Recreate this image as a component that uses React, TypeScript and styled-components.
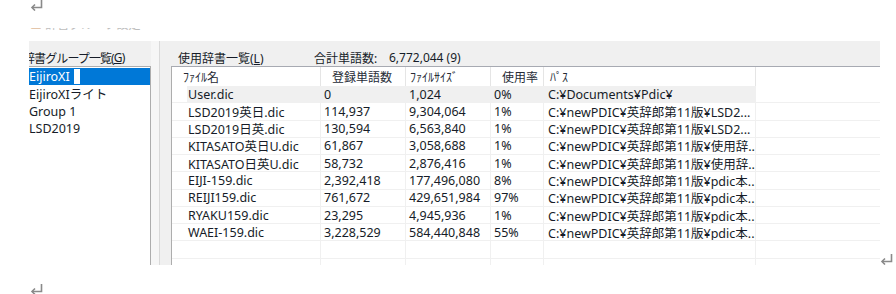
import React from "react";
import styled, { createGlobalStyle } from "styled-components";

const GlobalStyle = createGlobalStyle`
  html, body {
    margin: 0;
    padding: 0;
    background: #ffffff;
  }
  body {
    font-family: "Noto Sans", "Noto Sans CJK JP", sans-serif;
    font-size: 12.5px;
    color: #161c28;
  }
`;

const Page = styled.div`
  width: 896px;
  height: 294px;
  overflow: hidden;
`;

const MarkLine = styled.div<{ $top?: number }>`
  display: flex;
  padding-left: 30px;
  margin-top: ${(p) => p.$top || 0}px;
  height: 11px;
`;

const FadedLine = styled.div`
  margin: 17px 0 0 30px;
  height: 5px;
  overflow: hidden;
  color: #bdbdbd;
  font-size: 12px;
  line-height: 14px;
  & span {
    display: block;
    margin-top: -10px;
  }
  & b {
    color: #d39a6a;
    font-weight: normal;
  }
`;

const DialogRow = styled.div`
  display: flex;
  align-items: flex-end;
  margin: 8px 0 0 29px;
`;

const Dialog = styled.div`
  display: flex;
  width: 851px;
  height: 224px;
  background: #f0f0f0;
  overflow: hidden;
`;

const LeftPane = styled.div`
  display: flex;
  flex-direction: column;
  width: 126px;
  margin-left: -4px;
  flex-shrink: 0;
`;

const PaneLabel = styled.div`
  display: flex;
  align-items: center;
  height: 17px;
  padding-top: 8px;
  white-space: nowrap;
  font-size: 12px;
`;

const GroupLabel = styled(PaneLabel)`
  margin-left: -2px;
  letter-spacing: -0.9px;
`;

const ListBox = styled.div`
  flex: 1;
  background: #ffffff;
  border: 1px solid #adadad;
  border-bottom: none;
  padding-top: 1px;
`;

const ListItem = styled.div<{ $selected?: boolean }>`
  display: flex;
  align-items: center;
  height: 17.27px;
  padding-left: 3px;
  white-space: nowrap;
  background: ${(p) => (p.$selected ? "#0078d7" : "transparent")};
  color: ${(p) => (p.$selected ? "#ffffff" : "#161c28")};
`;

const EditCaret = styled.span`
  display: inline-block;
  width: 6px;
  height: 15px;
  margin-left: 4px;
  background: #ffffff;
`;

const Splitter = styled.div`
  width: 8px;
  flex-shrink: 0;
  background: #f6f6f6;
  border-right: 1px solid #d9d9d9;
`;

const RightPane = styled.div`
  display: flex;
  flex-direction: column;
  flex: 1;
  min-width: 0;
`;

const RightLabels = styled(PaneLabel)`
  padding-left: 18px;
`;

const LabelText = styled.span<{ $w: number }>`
  display: inline-block;
  width: ${(p) => p.$w}px;
`;

const ListView = styled.div`
  flex: 1;
  margin-left: 11px;
  background: #ffffff;
  border-top: 1px solid #a7aab2;
  border-left: 1px solid #adadad;
  overflow: hidden;
`;

const HeaderRow = styled.div`
  display: flex;
  height: 19px;
`;

const HeaderCell = styled.div<{ $w: number; $pad: number }>`
  box-sizing: border-box;
  width: ${(p) => p.$w}px;
  padding-left: ${(p) => p.$pad}px;
  border-right: 1px solid #e5e5e5;
  display: flex;
  align-items: center;
  font-size: 12px;
  color: #262b36;
  white-space: nowrap;
`;

const Row = styled.div`
  display: flex;
  box-sizing: border-box;
  height: 17.27px;
  border-bottom: 1px solid #f0f0f0;
`;

const Indent = styled.div`
  width: 15px;
  flex-shrink: 0;
`;

const RowBody = styled.div<{ $hot?: boolean }>`
  display: flex;
  background: ${(p) => (p.$hot ? "#f0f0f0" : "transparent")};
`;

const Cell = styled.div<{ $w: number; $pad: number }>`
  box-sizing: border-box;
  width: ${(p) => p.$w}px;
  padding-left: ${(p) => p.$pad}px;
  border-right: 1px solid #f0f0f0;
  display: flex;
  align-items: center;
  white-space: nowrap;
  overflow: hidden;
`;

function ReturnMark() {
  return (
    <svg width="13" height="11" viewBox="0 0 13 11">
      <path d="M11.5 0 V7.5 H2" fill="none" stroke="#8a8a8a" strokeWidth="1.6" />
      <path d="M5 4.5 L2 7.5 L5 10.5" fill="none" stroke="#8a8a8a" strokeWidth="1.6" />
    </svg>
  );
}

const headers = [
  { label: "ﾌｧｲﾙ名", w: 149, pad: 11 },
  { label: "登録単語数", w: 85, pad: 11 },
  { label: "ﾌｧｲﾙｻｲｽﾞ", w: 85, pad: 4 },
  { label: "使用率", w: 53, pad: 11 },
  { label: "ﾊﾟｽ", w: 212, pad: 6 },
];

const cellCols = [
  { w: 134, pad: 1 },
  { w: 85, pad: 3 },
  { w: 85, pad: 3 },
  { w: 53, pad: 3 },
  { w: 212, pad: 4 },
];

const rows = [
  ["User.dic", "0", "1,024", "0%", "C:¥Documents¥Pdic¥"],
  ["LSD2019英日.dic", "114,937", "9,304,064", "1%", "C:¥newPDIC¥英辞郎第11版¥LSD2..."],
  ["LSD2019日英.dic", "130,594", "6,563,840", "1%", "C:¥newPDIC¥英辞郎第11版¥LSD2..."],
  ["KITASATO英日U.dic", "61,867", "3,058,688", "1%", "C:¥newPDIC¥英辞郎第11版¥使用辞..."],
  ["KITASATO日英U.dic", "58,732", "2,876,416", "1%", "C:¥newPDIC¥英辞郎第11版¥使用辞..."],
  ["EIJI-159.dic", "2,392,418", "177,496,080", "8%", "C:¥newPDIC¥英辞郎第11版¥pdic本..."],
  ["REIJI159.dic", "761,672", "429,651,984", "97%", "C:¥newPDIC¥英辞郎第11版¥pdic本..."],
  ["RYAKU159.dic", "23,295", "4,945,936", "1%", "C:¥newPDIC¥英辞郎第11版¥pdic本..."],
  ["WAEI-159.dic", "3,228,529", "584,440,848", "55%", "C:¥newPDIC¥英辞郎第11版¥pdic本..."],
  ["", "", "", "", ""],
  ["", "", "", "", ""],
];

const groups = ["EijiroXI", "EijiroXIライト", "Group 1", "LSD2019"];

export default function App() {
  return (
    <Page>
      <GlobalStyle />
      <MarkLine>
        <ReturnMark />
      </MarkLine>
      <FadedLine>
        <span>
          <b>■</b> 辞書グループ設定
        </span>
      </FadedLine>
      <DialogRow>
        <Dialog>
          <LeftPane>
            <GroupLabel>
              辞書グループ一覧(<u>G</u>)
            </GroupLabel>
            <ListBox>
              {groups.map((g, i) => (
                <ListItem key={g} $selected={i === 0}>
                  {g}
                  {i === 0 && <EditCaret />}
                </ListItem>
              ))}
            </ListBox>
          </LeftPane>
          <Splitter />
          <RightPane>
            <RightLabels>
              <LabelText $w={136}>
                使用辞書一覧(<u>L</u>)
              </LabelText>
              <LabelText $w={75}>合計単語数:</LabelText>
              <span>6,772,044 (9)</span>
            </RightLabels>
            <ListView>
              <HeaderRow>
                {headers.map((h) => (
                  <HeaderCell key={h.label} $w={h.w} $pad={h.pad}>
                    {h.label}
                  </HeaderCell>
                ))}
              </HeaderRow>
              {rows.map((r, i) => (
                <Row key={i}>
                  <Indent />
                  <RowBody $hot={i === 0}>
                    {r.map((v, j) => (
                      <Cell key={j} $w={cellCols[j].w} $pad={cellCols[j].pad}>
                        {v}
                      </Cell>
                    ))}
                  </RowBody>
                </Row>
              ))}
            </ListView>
          </RightPane>
        </Dialog>
        <ReturnMark />
      </DialogRow>
      <MarkLine $top={19}>
        <ReturnMark />
      </MarkLine>
    </Page>
  );
}
